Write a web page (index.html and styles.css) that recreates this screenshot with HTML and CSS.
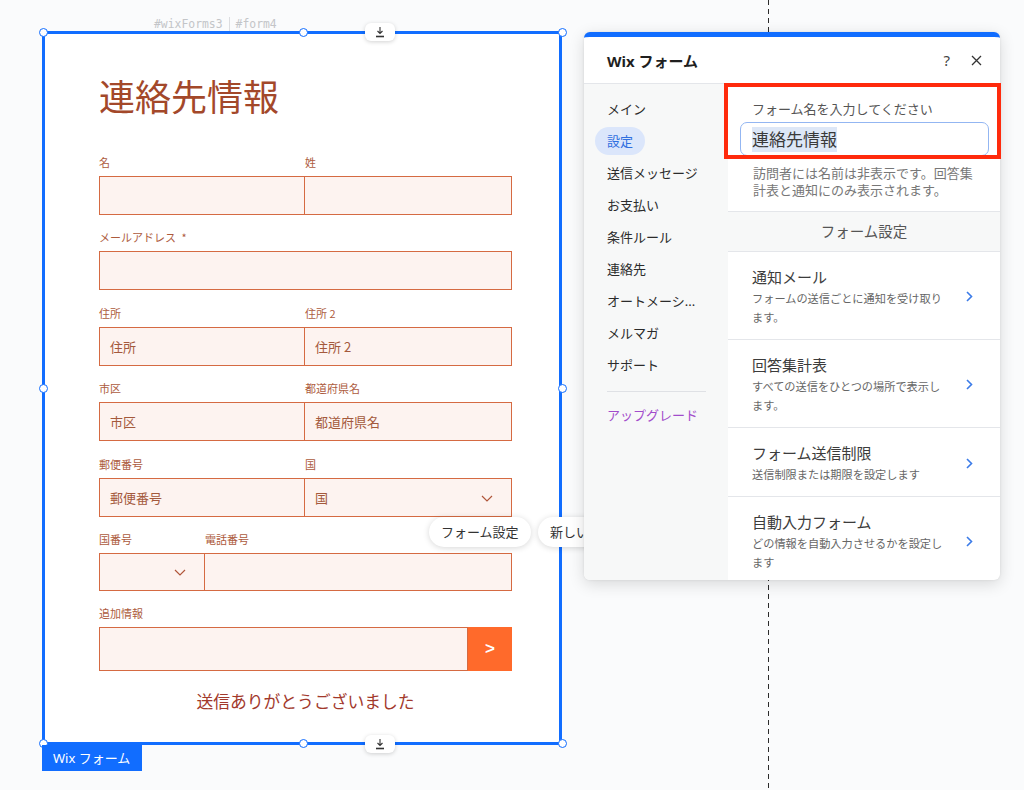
FILE: index.html
```html
<!DOCTYPE html>
<html lang="ja">
<head>
<meta charset="utf-8">
<link rel="stylesheet" href="styles.css">
</head>
<body>
<div class="canvas">
  <div class="guide"></div>

  <div class="sel-tag"><span>#wixForms3</span><span class="sep"></span><span>#form4</span></div>

  <div class="frame">
    <form class="form">
      <h1 class="form-title">連絡先情報</h1>

      <div class="row two">
        <div class="field"><label>名</label><div class="input"></div></div>
        <div class="field"><label>姓</label><div class="input joined"></div></div>
      </div>

      <div class="row">
        <div class="field"><label>メールアドレス <span class="req">*</span></label><div class="input"></div></div>
      </div>

      <div class="row two">
        <div class="field"><label>住所</label><div class="input">住所</div></div>
        <div class="field"><label>住所 2</label><div class="input joined">住所 2</div></div>
      </div>

      <div class="row two">
        <div class="field"><label>市区</label><div class="input">市区</div></div>
        <div class="field"><label>都道府県名</label><div class="input joined">都道府県名</div></div>
      </div>

      <div class="row two">
        <div class="field"><label>郵便番号</label><div class="input">郵便番号</div></div>
        <div class="field"><label>国</label><div class="input joined select">国<svg class="chev" width="12" height="7" viewBox="0 0 12 7"><path d="M1 1l5 5 5-5" fill="none" stroke="#b0563a" stroke-width="1.2"/></svg></div></div>
      </div>

      <div class="row phone">
        <div class="field"><label>国番号</label><div class="input select short"><svg class="chev" width="12" height="7" viewBox="0 0 12 7"><path d="M1 1l5 5 5-5" fill="none" stroke="#b0563a" stroke-width="1.2"/></svg></div></div>
        <div class="field"><label>電話番号</label><div class="input joined short"></div></div>
      </div>

      <div class="row">
        <div class="field"><label>追加情報</label>
          <div class="submit-line"><div class="input tall"></div><div class="go">&gt;</div></div>
        </div>
      </div>

      <p class="thanks">送信ありがとうございました</p>
    </form>

    <span class="handle h-tl"></span><span class="handle h-tm"></span><span class="handle h-tr"></span>
    <span class="handle h-ml"></span><span class="handle h-mr"></span>
    <span class="handle h-bl"></span><span class="handle h-bm"></span><span class="handle h-br"></span>
  </div>

  <div class="dl dl-top"><svg width="12" height="12" viewBox="0 0 12 12"><path d="M6 1v6.5M3.5 5 6 7.5 8.5 5" fill="none" stroke="#333" stroke-width="1.1"/><path d="M2 10.5h8" stroke="#333" stroke-width="1.6"/></svg></div>
  <div class="dl dl-bottom"><svg width="12" height="12" viewBox="0 0 12 12"><path d="M6 1v6.5M3.5 5 6 7.5 8.5 5" fill="none" stroke="#333" stroke-width="1.1"/><path d="M2 10.5h8" stroke="#333" stroke-width="1.6"/></svg></div>

  <div class="comp-tag">Wix フォーム</div>

  <div class="chip chip-1">フォーム設定</div>
  <div class="chip chip-2">新しいフィールド</div>

  <div class="panel">
    <div class="panel-head">
      <span class="panel-title">Wix フォーム</span>
      <span class="panel-actions">
        <span class="help">?</span>
        <svg width="11" height="11" viewBox="0 0 11 11"><path d="M1 1l9 9M10 1l-9 9" stroke="#333" stroke-width="1.3"/></svg>
      </span>
    </div>
    <div class="panel-body">
      <nav class="nav">
        <div class="nav-item"><span>メイン</span></div>
        <div class="nav-item active"><span>設定</span></div>
        <div class="nav-item"><span>送信メッセージ</span></div>
        <div class="nav-item"><span>お支払い</span></div>
        <div class="nav-item"><span>条件ルール</span></div>
        <div class="nav-item"><span>連絡先</span></div>
        <div class="nav-item"><span>オートメーシ...</span></div>
        <div class="nav-item"><span>メルマガ</span></div>
        <div class="nav-item"><span>サポート</span></div>
        <div class="nav-divider"></div>
        <div class="nav-item upgrade"><span>アップグレード</span></div>
      </nav>
      <div class="content">
        <div class="name-sec">
          <div class="name-label">フォーム名を入力してください</div>
          <div class="name-input"><span class="sel">連絡先情報</span></div>
          <p class="name-desc">訪問者には名前は非表示です。回答集計表と通知にのみ表示されます。</p>
        </div>
        <div class="sec-head">フォーム設定</div>
        <div class="opt">
          <div class="opt-text"><div class="opt-title">通知メール</div><div class="opt-desc">フォームの送信ごとに通知を受け取ります。</div></div>
          <svg class="opt-chev" width="7" height="11" viewBox="0 0 7 11"><path d="M1 1l4.5 4.5L1 10" fill="none" stroke="#3b7be8" stroke-width="1.6"/></svg>
        </div>
        <div class="opt">
          <div class="opt-text"><div class="opt-title">回答集計表</div><div class="opt-desc">すべての送信をひとつの場所で表示します。</div></div>
          <svg class="opt-chev" width="7" height="11" viewBox="0 0 7 11"><path d="M1 1l4.5 4.5L1 10" fill="none" stroke="#3b7be8" stroke-width="1.6"/></svg>
        </div>
        <div class="opt">
          <div class="opt-text"><div class="opt-title">フォーム送信制限</div><div class="opt-desc">送信制限または期限を設定します</div></div>
          <svg class="opt-chev" width="7" height="11" viewBox="0 0 7 11"><path d="M1 1l4.5 4.5L1 10" fill="none" stroke="#3b7be8" stroke-width="1.6"/></svg>
        </div>
        <div class="opt">
          <div class="opt-text"><div class="opt-title">自動入力フォーム</div><div class="opt-desc">どの情報を自動入力させるかを設定します</div></div>
          <svg class="opt-chev" width="7" height="11" viewBox="0 0 7 11"><path d="M1 1l4.5 4.5L1 10" fill="none" stroke="#3b7be8" stroke-width="1.6"/></svg>
        </div>
      </div>
    </div>
  </div>

  <div class="highlight"></div>
</div>
</body>
</html>
```

FILE: styles.css
```css
* { box-sizing: border-box; }
html, body { margin: 0; padding: 0; }
body {
  font-family: "Noto Sans", "Noto Sans CJK JP", sans-serif;
  background: #fafbfc;
  width: 1024px;
  height: 790px;
  overflow: hidden;
}
.canvas { position: relative; width: 1024px; height: 790px; }

.guide {
  position: absolute;
  left: 768px; top: 0; bottom: 0; width: 1px;
  background: repeating-linear-gradient(to bottom, #2b2b2b 0 5px, transparent 5px 9px);
}

.sel-tag {
  position: absolute;
  left: 154px; top: 16px;
  display: flex; align-items: center; gap: 6px;
  font-family: "DejaVu Sans Mono", "Liberation Mono", monospace;
  font-size: 11.4px; color: #c3c5c8; line-height: 16px;
}
.sel-tag .sep { width: 1px; height: 15px; background: #dcdde0; }

/* form frame */
.frame {
  position: absolute;
  left: 42px; top: 31px;
  width: 520px; height: 714px;
  border: 3px solid #116dff;
  background: #fff;
}
.form { margin: 0 0 0 54px; width: 413px; padding-top: 37px; }
.form-title {
  margin: 0 0 36px;
  font-family: "Noto Sans CJK JP", sans-serif;
  font-weight: 400; font-size: 36px; line-height: 48px;
  color: #a3482a;
}
.row { display: grid; grid-template-columns: 1fr; margin-bottom: 15.4px; }
.row.two { grid-template-columns: 206px 207px; }
.row.phone { grid-template-columns: 106px 307px; }
.field label {
  display: block;
  font-family: "Noto Sans CJK JP", sans-serif;
  font-size: 11px; line-height: 14px; color: #ad5b3d;
  margin-bottom: 7px;
}
.field label .req { margin-left: 3px; }
.input {
  height: 39px;
  border: 1px solid #d56a42;
  background: #fdf3f0;
  font-family: "Noto Sans CJK JP", sans-serif;
  font-size: 13px; line-height: 37px; color: #a4593c;
  padding-left: 10px;
  position: relative;
}
.input.joined { border-left: none; }
.input.short { height: 38px; line-height: 36px; }
.input.tall { height: 44px; flex: 1; }
.select .chev { position: absolute; right: 18px; top: 16px; }
.input.short .chev { right: 18px; top: 15px; }
.submit-line { display: flex; }
.go {
  width: 44px; height: 44px;
  background: #ff6a2b;
  color: #fff; font-family: "Liberation Sans", sans-serif;
  font-weight: 700; font-size: 17px;
  display: flex; align-items: center; justify-content: center;
}
.thanks {
  margin: 18px 0 0; text-align: center;
  font-family: "Noto Sans CJK JP", sans-serif;
  font-size: 16.8px; line-height: 24px; color: #a2392c;
}

.handle {
  position: absolute;
  width: 9px; height: 9px; border-radius: 50%;
  background: #fff; border: 1.5px solid #116dff;
}
.h-tl { left: -6px; top: -6px; }
.h-tm { left: 254px; top: -6px; }
.h-tr { left: 513px; top: -6px; }
.h-ml { left: -6px; top: 350px; }
.h-mr { left: 513px; top: 350px; }
.h-bl { left: -6px; top: 705px; }
.h-bm { left: 254px; top: 705px; }
.h-br { left: 513px; top: 705px; }

.dl {
  position: absolute;
  width: 30px; height: 18px;
  background: #fff; border-radius: 6px;
  box-shadow: 0 1px 4px rgba(0,0,0,0.18);
  display: flex; align-items: center; justify-content: center;
}
.dl-top { left: 365px; top: 23px; }
.dl-bottom { left: 365px; top: 735px; }

.comp-tag {
  position: absolute;
  left: 42px; top: 745px;
  width: 100px; height: 26px;
  background: #116dff; color: #fff;
  font-size: 13px; line-height: 26px;
  padding-left: 11px;
}

.chip {
  position: absolute;
  height: 30px; border-radius: 15px;
  background: #fff;
  box-shadow: 0 1px 6px rgba(0,0,0,0.16);
  font-size: 13px; line-height: 30px; color: #333;
  padding: 0 12px;
  white-space: nowrap;
}
.chip-1 { left: 429px; top: 517px; }
.chip-2 { left: 538px; top: 517px; }

/* panel */
.panel {
  position: absolute;
  left: 584px; top: 32px;
  width: 416px; height: 548px;
  border-radius: 6px;
  border-top: 5px solid #116dff;
  background: #fff;
  box-shadow: 0 4px 16px rgba(0,0,0,0.14), 0 0 3px rgba(0,0,0,0.08);
  overflow: hidden;
  display: flex; flex-direction: column;
}
.panel-head {
  height: 47px; flex: none;
  border-bottom: 1px solid #e4e6ea;
  display: flex; align-items: center; justify-content: space-between;
  padding: 0 18px 0 23px;
}
.panel-title { font-weight: 700; font-size: 15px; color: #1f1f1f; }
.panel-actions { display: flex; align-items: center; gap: 21px; }
.help { font-size: 15px; color: #444; }
.panel-body { flex: 1; display: flex; min-height: 0; }
.nav {
  width: 144px; flex: none;
  background: #f7f8f8;
  padding-top: 9px;
}
.nav-item {
  height: 32px; display: flex; align-items: center;
  padding-left: 11px;
  font-size: 13px; color: #2b2b2b;
}
.nav-item span { padding: 0 12px; height: 28px; line-height: 28px; border-radius: 14px; white-space: nowrap; }
.nav-item.active span { background: #dbe6fb; color: #2f6fe0; }
.nav-divider { height: 1px; background: #dfe1e5; width: 99px; margin: 10px 0 7px 23px; }
.nav-item.upgrade { color: #a24ccb; }

.content { flex: 1; display: flex; flex-direction: column; min-width: 0; }
.name-sec { padding: 16px 11px 12px 12px; }
.name-label { font-size: 13px; line-height: 18px; color: #555; padding-left: 12px; }
.name-input {
  margin-top: 4px; height: 34px;
  border: 1px solid #93b6f2; border-radius: 7px;
  padding: 4px 11px;
  font-family: "Noto Sans CJK JP", sans-serif;
  font-size: 17px; line-height: 24px; color: #3a3a3a;
}
.name-input .sel { background: #dde7f7; display: inline-block; height: 25px; }
.name-desc {
  margin: 9px 0 0 13px; width: 226px;
  font-size: 13px; line-height: 17px; color: #777;
}
.sec-head {
  height: 41px; flex: none;
  border-top: 1px solid #e4e6ea; border-bottom: 1px solid #e4e6ea;
  background: #f7f8f8;
  text-align: center; font-size: 14.5px; line-height: 39px; color: #555;
}
.opt {
  flex: none;
  display: flex; align-items: center;
  padding: 14px 0 12px 24px;
  border-bottom: 1px solid #e4e6ea;
}
.opt-text { width: 196px; }
.opt-title { font-size: 15px; line-height: 22px; color: #3c3c3c; margin-bottom: 1px; }
.opt-desc { font-size: 11.2px; line-height: 19px; color: #666; }
.opt-chev { margin-left: auto; margin-right: 27px; }

.highlight {
  position: absolute;
  left: 724px; top: 83px;
  width: 277px; height: 76px;
  border: 4px solid #ff2a0c;
}
```
